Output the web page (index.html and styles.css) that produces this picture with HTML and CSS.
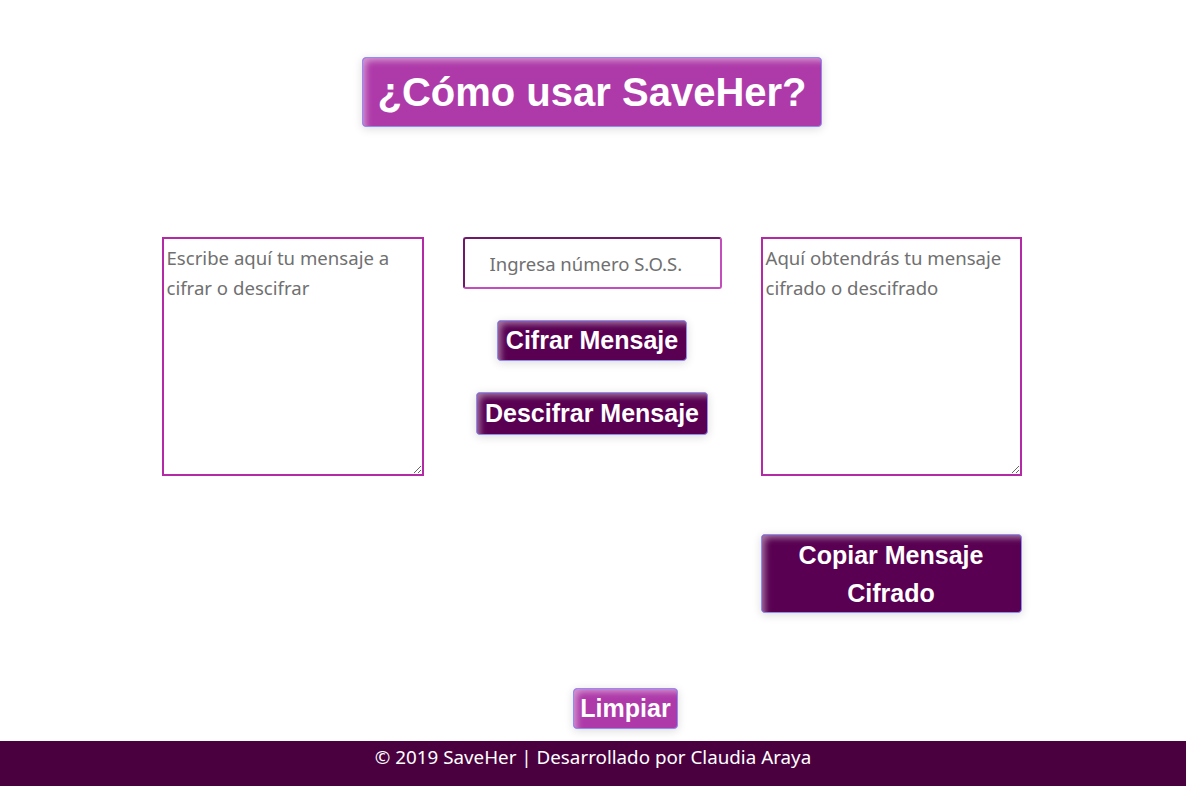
FILE: index.html
```html
<!DOCTYPE html>
<html lang="es">
<head>
<meta charset="utf-8">
<title>SaveHer</title>
<link rel="stylesheet" href="styles.css">
</head>
<body>
<main class="page">
  <header class="top">
    <button class="btn btn-light btn-title">¿Cómo usar SaveHer?</button>
  </header>
  <section class="grid">
    <textarea class="box" placeholder="Escribe aquí tu mensaje a cifrar o descifrar"></textarea>
    <div class="middle">
      <input class="sos" type="text" placeholder="Ingresa número S.O.S.">
      <button class="btn btn-dark">Cifrar Mensaje</button>
      <button class="btn btn-dark">Descifrar Mensaje</button>
    </div>
    <textarea class="box" placeholder="Aquí obtendrás tu mensaje cifrado o descifrado"></textarea>
    <div></div>
    <div></div>
    <button class="btn btn-dark btn-copy">Copiar Mensaje Cifrado</button>
  </section>
  <div class="clear-row">
    <button class="btn btn-light btn-clear">Limpiar</button>
  </div>
</main>
<footer class="footer">© 2019 SaveHer | Desarrollado por Claudia Araya</footer>
</body>
</html>
```
FILE: styles.css
```css
html, body {
  margin: 0;
  padding: 0;
  background: #ffffff;
}
body {
  font-family: "Noto Sans", "Open Sans", sans-serif;
}
.page {
  display: flex;
  flex-direction: column;
  align-items: center;
  padding-top: 57px;
}
.top {
  display: flex;
  justify-content: center;
  padding-right: 2px;
}
.btn {
  font-family: "Liberation Sans", Arial, sans-serif;
  font-weight: bold;
  color: #ffffff;
  border: 1px solid #8f8cf5;
  border-radius: 4px;
  box-shadow: inset 5px 5px 6px -2px rgba(255, 255, 255, 0.45), 0 2px 10px rgba(0, 0, 0, 0.14);
  cursor: pointer;
  margin: 0;
}
.btn-light {
  background: #ae3aa9;
}
.btn-dark {
  background: #590052;
}
.btn-title {
  font-size: 40px;
  line-height: 46px;
  padding: 11px 14px 11px 14px;
}
.grid {
  display: grid;
  grid-template-columns: 262px 259px 261px;
  column-gap: 39px;
  row-gap: 58px;
  margin-top: 110px;
  padding-right: 3px;
}
.box {
  box-sizing: border-box;
  width: 262px;
  height: 239px;
  border: 2px solid #b42aa6;
  padding: 4px 3px;
  font-family: "Noto Sans", "Open Sans", sans-serif;
  font-size: 18.6px;
  line-height: 30px;
  color: #333;
  resize: vertical;
  margin: 0;
  display: block;
}
.box + .middle + .box {
  width: 261px;
}
.box::placeholder, .sos::placeholder {
  color: #707070;
}
.middle {
  display: flex;
  flex-direction: column;
  align-items: center;
  gap: 31px;
}
.sos {
  box-sizing: border-box;
  width: 259px;
  height: 52px;
  border-width: 2px;
  border-style: solid;
  border-color: #6e1a68 #c44cbd #c44cbd #6e1a68;
  border-radius: 3px;
  padding: 0 25px;
  font-family: "Noto Sans", "Open Sans", sans-serif;
  font-size: 18.5px;
  margin: 0;
}
.btn-dark {
  font-size: 25px;
  line-height: 29px;
  padding: 5px 8px 5px 8px;
}
.middle .btn + .btn {
  padding-top: 6px;
  padding-bottom: 6px;
}
.btn-copy {
  width: 261px;
  font-size: 25px;
  line-height: 38px;
  padding: 1px 20px 0;
}
.clear-row {
  display: flex;
  justify-content: center;
  margin-top: 75px;
  margin-bottom: 12px;
  padding-left: 65px;
}
.btn-clear {
  font-size: 25px;
  line-height: 29px;
  padding: 5px 6px;
}
.footer {
  background: #4a003f;
  color: #ffffff;
  text-align: center;
  font-size: 18.8px;
  height: 45px;
  box-sizing: border-box;
  padding-top: 3px;
  padding-right: 0;
}
```
